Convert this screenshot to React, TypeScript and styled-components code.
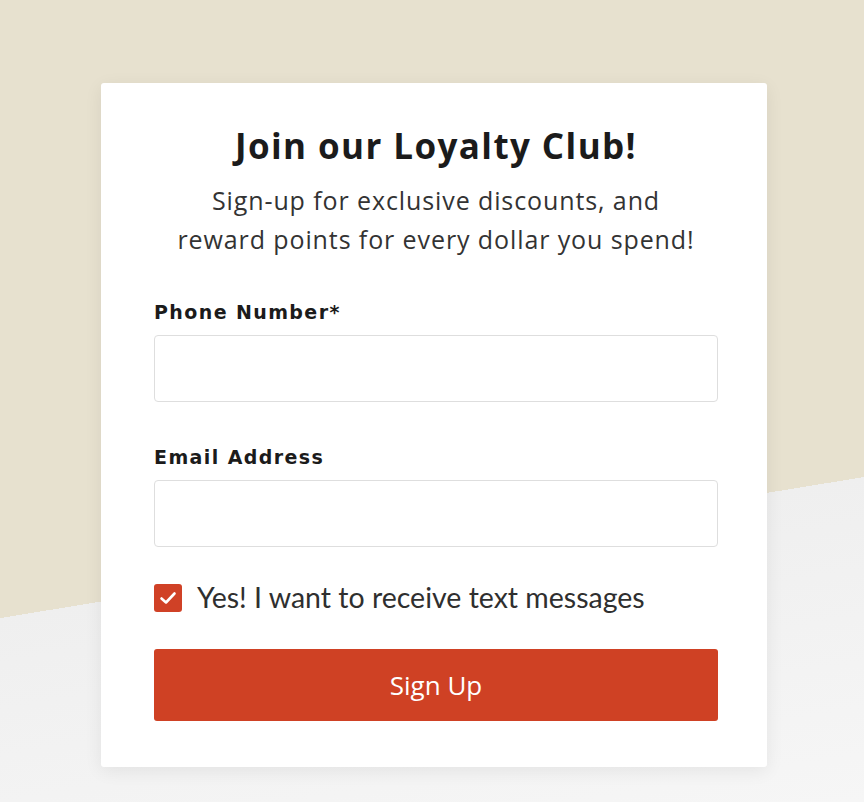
import React from "react";
import styled, { createGlobalStyle } from "styled-components";

const GlobalStyle = createGlobalStyle`
  html, body { margin: 0; padding: 0; height: 100%; }
  body {
    min-height: 802px;
    background: linear-gradient(170.73deg, #e7e1cf 0px, #e7e1cf 610px, #efefef 610px, #f6f6f6 100%);
    font-family: "Lato", "Liberation Sans", sans-serif;
  }
`;

const Page = styled.div`
  display: flex;
  padding: 83px 0 0 101px;
`;

const Card = styled.div`
  width: 564px;
  background: #ffffff;
  border-radius: 3px;
  box-shadow: 0 4px 18px rgba(0, 0, 0, 0.07);
  padding: 43px 49px 46px 53px;
  display: flex;
  flex-direction: column;
`;

const Title = styled.h1`
  margin: 0;
  font-family: "Open Sans", "Liberation Sans", sans-serif;
  font-weight: 700;
  font-size: 35px;
  letter-spacing: 1.4px;
  line-height: 40px;
  color: #1b1b1b;
  text-align: center;
`;

const Subtitle = styled.p`
  margin: 15px 0 0;
  font-family: "Open Sans", "Liberation Sans", sans-serif;
  font-size: 25px;
  letter-spacing: 0.9px;
  line-height: 39px;
  color: #333333;
  text-align: center;
`;

const Label = styled.label<{ $gap: number }>`
  display: block;
  margin-top: ${(p) => p.$gap}px;
  font-family: "DejaVu Sans", "Liberation Sans", sans-serif;
  font-weight: 700;
  font-size: 19px;
  letter-spacing: 1.4px;
  line-height: 24px;
  color: #1b1b1b;
`;

const Input = styled.input`
  box-sizing: border-box;
  margin-top: 11px;
  width: 100%;
  height: 67px;
  border: 1.5px solid #dedede;
  border-radius: 4px;
  background: #fff;
  outline: none;
`;

const CheckRow = styled.div`
  display: flex;
  align-items: center;
  gap: 15px;
  margin-top: 37px;
  height: 28px;
`;

const Box = styled.span`
  width: 28px;
  height: 28px;
  border-radius: 3px;
  background: #d04126;
  display: flex;
  align-items: center;
  justify-content: center;
  flex: none;
`;

const CheckText = styled.span`
  font-family: "Lato", "Liberation Sans", sans-serif;
  font-size: 28.5px;
  line-height: 28px;
  color: #2f2f2f;
  position: relative;
  top: -1px;
`;

const Button = styled.button`
  margin-top: 37px;
  height: 72px;
  width: 100%;
  border: none;
  border-radius: 3px;
  background: #cf4124;
  color: #ffffff;
  font-family: "Open Sans", "Liberation Sans", sans-serif;
  font-size: 26px;
  cursor: pointer;
`;

export default function App() {
  return (
    <>
      <GlobalStyle />
      <Page>
        <Card>
          <Title>Join our Loyalty Club!</Title>
          <Subtitle>
            Sign-up for exclusive discounts, and
            <br />
            reward points for every dollar you spend!
          </Subtitle>
          <Label $gap={41}>Phone Number*</Label>
          <Input type="tel" />
          <Label $gap={43}>Email Address</Label>
          <Input type="email" />
          <CheckRow>
            <Box>
              <svg width="22" height="22" viewBox="0 0 22 22" fill="none">
                <path d="M4.5 11.5 L9 15.5 L17.5 6.5" stroke="#ffffff" strokeWidth="2.6" strokeLinecap="round" strokeLinejoin="round" />
              </svg>
            </Box>
            <CheckText>Yes! I want to receive text messages</CheckText>
          </CheckRow>
          <Button>Sign Up</Button>
        </Card>
      </Page>
    </>
  );
}
